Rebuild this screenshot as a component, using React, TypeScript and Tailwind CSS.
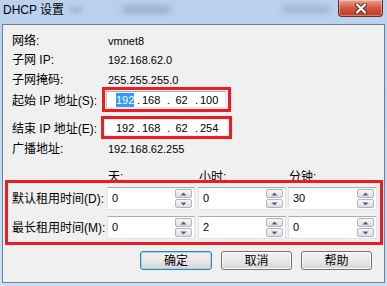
import React from "react";

const FONT = "font-['Liberation_Sans','Noto_Sans_CJK_SC',sans-serif]";

function CloseButton() {
  return (
    <div className="w-[45px] h-[17px] rounded-b-[4px] border border-t-0 border-[#6e2a22] bg-gradient-to-b from-[#e9a493] via-[#d2553f] to-[#c13a22] flex items-center justify-center shadow-[inset_0_0_0_1px_rgba(255,255,255,0.35)]">
      <svg width="14" height="11" viewBox="0 0 14 11" aria-hidden="true">
        <path d="M3 1.5 L11 9.5 M11 1.5 L3 9.5" stroke="#5a2a24" strokeWidth="4" strokeLinecap="round" />
        <path d="M3 1.5 L11 9.5 M11 1.5 L3 9.5" stroke="#ffffff" strokeWidth="2.2" strokeLinecap="round" />
      </svg>
    </div>
  );
}

function Arrow({ up }: { up?: boolean }) {
  return (
    <svg width="7" height="4" viewBox="0 0 7 4" aria-hidden="true">
      <path d={up ? "M0.5 3.5 L3.5 0.5 L6.5 3.5 Z" : "M0.5 0.5 L3.5 3.5 L6.5 0.5 Z"} fill="#4d6185" />
    </svg>
  );
}

function Spinner({ value, width }: { value: string; width: string }) {
  return (
    <div
      className={`${width} h-[23px] bg-white border border-[#dfe3ea] border-t-[#abadb3] flex items-start justify-between`}
    >
      <span className="pl-[4px] pt-[3px] text-[11px] leading-[14px] text-black">{value}</span>
      <div className="flex flex-col gap-[1px] pt-[1px] pr-[2px]">
        <div className="w-[17px] h-[9px] rounded-[2px] border border-[#b3b6bd] bg-gradient-to-b from-[#f6f6f6] to-[#dedede] flex items-center justify-center">
          <Arrow up />
        </div>
        <div className="w-[17px] h-[9px] rounded-[2px] border border-[#b3b6bd] bg-gradient-to-b from-[#f6f6f6] to-[#dedede] flex items-center justify-center">
          <Arrow />
        </div>
      </div>
    </div>
  );
}

// octets of the IP control, with the dots sitting where the Win32 control draws them
function IpField({ parts, selectFirst }: { parts: string[]; selectFirst?: boolean }) {
  return (
    <div className="flex items-center text-[11px] leading-[14px] text-black">
      <span className={`w-[18px] text-center ${selectFirst ? "bg-[#3399ff] text-white" : ""}`}>{parts[0]}</span>
      <span className="ml-[3px] w-[3px]">.</span>
      <span className="ml-[2px] w-[18px] text-center">{parts[1]}</span>
      <span className="ml-[7px] w-[3px]">.</span>
      <span className="ml-[5px] w-[13px] text-center">{parts[2]}</span>
      <span className="ml-[7px] w-[3px]">.</span>
      <span className="ml-[2px] w-[18px] text-center">{parts[3]}</span>
    </div>
  );
}

function InfoRow({ label, value, h }: { label: string; value: string; h: string }) {
  return (
    <div className={`${h} flex items-start`}>
      <span className="w-[96px] text-[12px] leading-[20px]">{label}</span>
      <span className="text-[11px] leading-[20px]">{value}</span>
    </div>
  );
}

function Button({ label, primary }: { label: string; primary?: boolean }) {
  return (
    <button
      className={`h-[19px] rounded-[3px] border text-[12px] leading-[14px] text-black flex items-center justify-center bg-gradient-to-b from-[#f2f2f2] via-[#e8e8e8] to-[#d4d4d4] ${
        primary ? "w-[72px] border-[#3c7fb1] shadow-[inset_0_0_0_1px_#9fd6f5]" : "w-[71px] border-[#707070] shadow-[inset_0_0_0_1px_#fbfbfb]"
      }`}
    >
      {label}
    </button>
  );
}

export default function App() {
  return (
    <div className={`${FONT} w-[387px] h-[286px] flex flex-col overflow-hidden bg-gradient-to-b from-[#b9d1ee] to-[#cddff4] text-black`}>
      {/* title bar */}
      <div className="h-[24px] flex items-start">
        <span className="pl-[3px] pt-[3px] text-[12px] leading-[14px] w-[66px]">DHCP 设置</span>
        <div className="mt-[7px] ml-[4px] w-[12px] h-[6px] bg-[#8aa0bb] opacity-50 blur-[2px]" />
        <div className="mt-[6px] ml-[40px] w-[48px] h-[7px] bg-[#5e7391] opacity-40 blur-[3px]" />
        <div className="mt-[6px] ml-[112px] w-[48px] h-[7px] bg-[#5e7391] opacity-30 blur-[3px]" />
        <div className="ml-auto mr-[4px]">
          <CloseButton />
        </div>
      </div>

      {/* client area */}
      <div className="mx-[2px] mb-[3px] flex-1 border border-[#6f7f94] bg-[#f0f0f0] flex flex-col">
        <div className="pt-[6px] pl-[9px] flex flex-col">
          <InfoRow label="网络:" value="vmnet8" h="h-[19px]" />
          <InfoRow label="子网 IP:" value="192.168.62.0" h="h-[20px]" />
          <InfoRow label="子网掩码:" value="255.255.255.0" h="h-[17px]" />

          <div className="h-[25px] flex items-center">
            <span className="w-[90px] text-[12px] leading-[14px] mt-[3px]">起始 IP 地址(S):</span>
            <div className="relative w-[129px] h-[25px] border-[3px] border-[#ed1c24] p-[1px] pr-[2px]">
              <div className="h-full bg-white border border-[#e3e6ea] border-t-[#a8abb0] border-l-[#c8cbd0] flex items-center pl-[9px] pt-[1px]">
                <IpField parts={["192", "168", "62", "100"]} selectFirst />
              </div>
            </div>
          </div>

          <div className="mt-[4px] h-[23px] flex items-center">
            <span className="w-[89px] text-[12px] leading-[14px] mt-[3px]">结束 IP 地址(E):</span>
            <div className="relative w-[131px] h-[23px] border-[3px] border-[#ed1c24] p-[1px] pr-[2px]">
              <div className="h-full bg-white flex items-center pl-[11px] pt-[1px]">
                <IpField parts={["192", "168", "62", "254"]} />
              </div>
            </div>
          </div>

          <InfoRow label="广播地址:" value="192.168.62.255" h="h-[18px]" />

          <div className="h-[23px] flex items-start text-[12px] leading-[14px] pt-[13px]">
            <span className="ml-[96px] w-[91px]">天:</span>
            <span className="w-[90px]">小时:</span>
            <span>分钟:</span>
          </div>
        </div>

        {/* lease box */}
        <div className="relative ml-[2px] w-[378px] h-[65px] border-[3px] border-[#ed1c24] pl-[4px] pt-[4px] flex flex-col gap-[6px]">
          <div className="flex items-center">
            <span className="w-[95px] text-[12px] leading-[14px]">默认租用时间(D):</span>
            <Spinner value="0" width="w-[88px]" />
            <div className="w-[3px]" />
            <Spinner value="0" width="w-[88px]" />
            <div className="w-[2px]" />
            <Spinner value="30" width="w-[89px]" />
          </div>
          <div className="flex items-center">
            <span className="w-[95px] text-[12px] leading-[14px]">最长租用时间(M):</span>
            <Spinner value="0" width="w-[88px]" />
            <div className="w-[3px]" />
            <Spinner value="2" width="w-[88px]" />
            <div className="w-[2px]" />
            <Spinner value="0" width="w-[89px]" />
          </div>
        </div>

        {/* buttons */}
        <div className="mt-[6px] pr-[12px] flex justify-end gap-[9px]">
          <Button label="确定" primary />
          <Button label="取消" />
          <Button label="帮助" />
        </div>
      </div>
    </div>
  );
}
